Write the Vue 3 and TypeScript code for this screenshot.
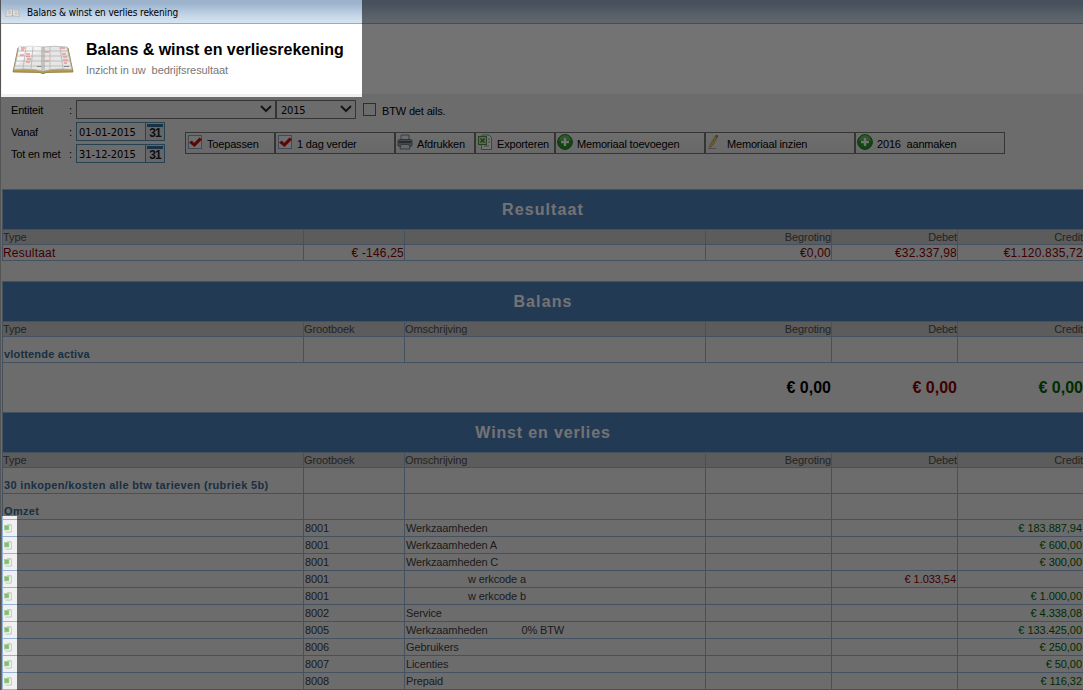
<script setup lang="ts">
interface Column { label: string; num?: boolean }
interface Row { code: string; name: string; indent?: boolean; extra?: string; debet?: string; credit?: string }
interface Action { label: string; icon: string; width: number }

const actions: Action[] = [
  { label: 'Toepassen', icon: 'check', width: 90 },
  { label: '1 dag verder', icon: 'check', width: 120 },
  { label: 'Afdrukken', icon: 'print', width: 80 },
  { label: 'Exporteren', icon: 'sheet', width: 80 },
  { label: 'Memoriaal toevoegen', icon: 'plus', width: 150 },
  { label: 'Memoriaal inzien', icon: 'pencil', width: 150 },
  { label: '2016  aanmaken', icon: 'plus', width: 150 },
]
const amounts: Column[] = [
  { label: 'Begroting', num: true },
  { label: 'Debet', num: true },
  { label: 'Credit', num: true },
]
const resultCols: Column[] = [{ label: 'Type' }, { label: '' }, { label: '' }, ...amounts]
const ledgerCols: Column[] = [{ label: 'Type' }, { label: 'Grootboek' }, { label: 'Omschrijving' }, ...amounts]
const rows: Row[] = [
  { code: '8001', name: 'Werkzaamheden', credit: '€ 183.887,94' },
  { code: '8001', name: 'Werkzaamheden A', credit: '€ 600,00' },
  { code: '8001', name: 'Werkzaamheden C', credit: '€ 300,00' },
  { code: '8001', name: 'w erkcode a', indent: true, debet: '€ 1.033,54' },
  { code: '8001', name: 'w erkcode b', indent: true, credit: '€ 1.000,00' },
  { code: '8002', name: 'Service', credit: '€ 4.338,08' },
  { code: '8005', name: 'Werkzaamheden', extra: '0% BTW', credit: '€ 133.425,00' },
  { code: '8006', name: 'Gebruikers', credit: '€ 250,00' },
  { code: '8007', name: 'Licenties', credit: '€ 50,00' },
  { code: '8008', name: 'Prepaid', credit: '€ 116,32' },
]
const groups: string[] = ['30 inkopen/kosten alle btw tarieven (rubriek 5b)', 'Omzet']
</script>

<template>
  <div class="window">
    <div class="titlebar">
      <svg class="tinybook" width="15" height="10" viewBox="0 0 15 10">
        <path d="M2 1.5 L7 1 L13 1.5 L14.5 8.5 L8 8 L.5 8.5Z" fill="#dcdcdc" stroke="#b5b2aa" stroke-width=".7" />
        <path d="M7.5 1V8M3 3H6M3 5H6M9 3H12M10 5.5H12.5" stroke="#a9a4a4" stroke-width=".7" />
      </svg>
      <span>Balans &amp; winst en verlies rekening</span>
    </div>
    <header class="head">
      <svg class="book" width="62" height="32" viewBox="0 0 62 32">
        <path d="M6 4 L1 28 L28 28.5 Q31 31 34 28.5 L61 28 L56 4Z" fill="#b59a55" stroke="#8b7539" stroke-width=".8" />
        <path d="M7 3 Q20 1.500 31 3 Q42 1.500 55 3 L60 25.5 Q43 24 31 27 Q18 24 2 25.5Z" fill="#e6e6e4" stroke="#aaa" stroke-width=".7" />
        <path d="M7 3 Q20 1.500 30 3 L30 8 Q17 9 4 22Z" fill="#f6f6f6" />
        <path d="M6 7H56M5 12H57M4 17H58M3 22H59M14 3L11 25M21 3L19 25M38 3V25M48 3L51 25" stroke="#b4b4b6" stroke-width=".8" fill="none" />
        <path d="M30 3V26M32 3V26" stroke="#a0a0a0" stroke-width="1" />
        <path d="M9 4H13M9 6H12M8 11H12M14 10H18M14 12.500H18M15 15H19M14 18H18M33 8H37M33 17H37M48 4H53M50 10H54M51 13H55M51 16H56M52 19H55" stroke="#e89a9a" stroke-width="1.300" />
        <path d="M25 22.500H29M52 22.500H57" stroke="#888" stroke-width="1.200" />
      </svg>
      <div>
        <h1>Balans &amp; winst en verliesrekening</h1>
        <p>Inzicht in uw&nbsp; bedrijfsresultaat</p>
      </div>
    </header>

    <section class="filters">
      <div class="fields">
        <div class="field">
          <label>Entiteit</label><i>:</i>
          <div class="select wide"><span></span><svg width="12" height="8" viewBox="0 0 12 8"><path d="M1 1L6 6L11 1" /></svg></div>
          <div class="select year"><span>2015</span><svg width="12" height="8" viewBox="0 0 12 8"><path d="M1 1L6 6L11 1" /></svg></div>
          <div class="box"></div><span class="btw">BTW det ails.</span>
        </div>
        <div v-for="f in [['Vanaf', '01-01-2015'], ['Tot en met', '31-12-2015']]" :key="f[0]" class="field">
          <label>{{ f[0] }}</label><i>:</i>
          <div class="date">{{ f[1] }}</div>
          <div class="cal"><b>31</b></div>
        </div>
      </div>
      <div class="actions">
        <div v-for="a in actions" :key="a.label" class="action" :style="{ width: a.width + 'px' }">
          <svg v-if="a.icon === 'check'" width="16" height="16" viewBox="0 0 16 16">
            <rect x="1.500" y="1.500" width="13" height="13" fill="#f4f6fa" stroke="#8da2c4" />
            <path d="M2 8.500L5 6.500L7 9L12.500 3.500L15 5.500L7.500 13Z" fill="#c8100c" />
          </svg>
          <svg v-else-if="a.icon === 'print'" width="16" height="16" viewBox="0 0 16 16">
            <path d="M4 6V1H12V6" fill="#eef3f8" stroke="#7b8794" />
            <rect x="1" y="5.500" width="14" height="7" rx="1.500" fill="#9ba3ab" stroke="#6b737b" />
            <path d="M2 8H14" stroke="#44494f" stroke-width="1.500" />
            <path d="M4 10.500H12L13 15H3Z" fill="#e3eaf0" stroke="#78818b" />
          </svg>
          <svg v-else-if="a.icon === 'sheet'" width="16" height="16" viewBox="0 0 16 16">
            <path d="M5.500 1H12L14.500 3.500V15.500H4.500V2Z" fill="#fff" stroke="#8298ad" />
            <path d="M11 5H13M11 8H13M7 12H12" stroke="#8298ad" />
            <rect x="1.500" y="2.500" width="8" height="8" fill="#cce5c0" stroke="#4f963e" />
            <path d="M3.500 4.500L7.500 8.500M7.500 4.500L3.500 8.500" stroke="#3c862d" stroke-width="1.400" />
          </svg>
          <svg v-else-if="a.icon === 'plus'" width="16" height="16" viewBox="0 0 16 16">
            <circle cx="8" cy="8" r="7.400" fill="#29992a" stroke="#217c22" />
            <path d="M2 7A6 6 0 0 1 14 7Q8 4 2 7" fill="#6fbf62" />
            <path d="M8 4V12M4 8H12" stroke="#fff" stroke-width="2.400" />
          </svg>
          <svg v-else width="16" height="16" viewBox="0 0 16 16">
            <path d="M1 14.500H9" stroke="#aaa" />
            <path d="M2.500 13.500L3.500 10L8.500 2L10.500 3.200L5.500 11.500Z" fill="#f0ca62" stroke="#ad883e" stroke-width=".7" />
            <path d="M8.500 2L9.500 .8L11 1.700L10.500 3.200Z" fill="#9b5555" />
          </svg>
          <span>{{ a.label }}</span>
        </div>
      </div>
    </section>

    <section class="table result">
      <h2>Resultaat</h2>
      <div class="row cols"><span v-for="(c, i) in resultCols" :key="i" :class="{ num: c.num }">{{ c.label }}</span></div>
      <div class="row sum">
        <span>Resultaat</span><span class="num">€ -146,25</span><span></span>
        <span class="num">€0,00</span><span class="num">€32.337,98</span><span class="num">€1.120.835,72</span>
      </div>
    </section>

    <section class="table balance">
      <h2>Balans</h2>
      <div class="row cols"><span v-for="(c, i) in ledgerCols" :key="i" :class="{ num: c.num }">{{ c.label }}</span></div>
      <div class="row group"><span>vlottende activa</span><span v-for="n in 5" :key="n"></span></div>
      <div class="totals"><b>€ 0,00</b><b class="red">€ 0,00</b><b class="green">€ 0,00</b></div>
    </section>

    <section class="table profit">
      <h2>Winst en verlies</h2>
      <div class="row cols"><span v-for="(c, i) in ledgerCols" :key="i" :class="{ num: c.num }">{{ c.label }}</span></div>
      <div v-for="g in groups" :key="g" class="row group"><span>{{ g }}</span><span v-for="n in 5" :key="n"></span></div>
      <div v-for="(r, i) in rows" :key="i" class="row item">
        <span>
          <svg width="8" height="9" viewBox="0 0 8 9">
            <path d="M3 .8H7.200V8H1.500" fill="#fff" stroke="#a9bfae" stroke-width=".9" />
            <rect x=".5" y="1.500" width="4.500" height="4.500" fill="#82bd70" stroke="#a7cf9b" stroke-width=".8" />
          </svg>
        </span>
        <span>{{ r.code }}</span>
        <span :class="{ indent: r.indent }">{{ r.name }}<em v-if="r.extra">{{ r.extra }}</em></span>
        <span></span>
        <span class="num red">{{ r.debet }}</span>
        <span class="num green">{{ r.credit }}</span>
      </div>
    </section>
    <div class="shade"></div>
  </div>
</template>

<style>
body { margin: 0; overflow: hidden; }
</style>

<style scoped>
.window {
  position: relative;
  box-sizing: border-box;
  width: 1083px;
  height: 690px;
  overflow: hidden;
  background: #f0f0f0;
  border-left: 1px solid #555;
  font: 11px "Liberation Sans", Arial, sans-serif;
  color: #000;
}
.titlebar {
  display: flex;
  align-items: center;
  box-sizing: border-box;
  height: 24px;
  padding: 2px 0 0 4px;
  gap: 7px;
  background: linear-gradient(#9db2c9 0, #9cb4cf 15%, #c2d4e6 65%, #d7e4f1);
  border-bottom: 1px solid #a5a9ae;
  font: 10px "DejaVu Sans Condensed", "DejaVu Sans", sans-serif;
  letter-spacing: -.12px;
}
.head {
  display: flex;
  height: 70px;
  margin-left: 1px;
  background: #fff;
}
.book { margin: 20px 0 0 10px; }
.head div { margin-left: 12px; }
h1 {
  margin: 16px 0 0;
  font-size: 16px;
  line-height: 20px;
  letter-spacing: -.03px;
  white-space: nowrap;
}
p { margin: 4px 0 0; line-height: 13px; color: #777; letter-spacing: -.07px; }
.filters {
  display: flex;
  height: 95px;
  margin-left: 10px;
}
.fields { width: 174px; padding-top: 6px; }
.field {
  display: flex;
  height: 19px;
  margin-bottom: 3px;
  line-height: 21px;
  white-space: nowrap;
  letter-spacing: -.2px;
}
.field label { flex: none; width: 58px; }
.field i { flex: none; width: 7px; font-style: normal; }
.select {
  display: flex;
  flex: none;
  align-items: center;
  justify-content: space-between;
  box-sizing: border-box;
  height: 19px;
  padding: 0 3px 2px 4px;
  border: 1px solid #777;
  font-family: "DejaVu Sans Condensed", "DejaVu Sans", sans-serif;
}
.select span { padding-top: 3px; }
.select path { fill: none; stroke: #333; stroke-width: 2; }
.wide { width: 200px; }
.year { width: 80px; }
.box {
  flex: none;
  box-sizing: border-box;
  width: 13px;
  height: 13px;
  margin: 3px 6px 0 7px;
  border: 1px solid #666;
}
.btw { padding-top: 1px; letter-spacing: -.15px; }
.date {
  flex: none;
  box-sizing: border-box;
  width: 70px;
  height: 19px;
  padding-left: 2px;
  border: 1px solid #5591b5;
  line-height: 19px;
  font-family: "DejaVu Sans Condensed", "DejaVu Sans", sans-serif;
  letter-spacing: -.08px;
}
.cal {
  flex: none;
  box-sizing: border-box;
  width: 19px;
  height: 19px;
  padding: 1px;
  border: 1px solid #5591b5;
  border-left: 0;
  background: #e0e5e9;
}
.cal b {
  display: block;
  height: 11px;
  border-top: 3px solid #386f9a;
  font-size: 12px;
  line-height: 13px;
  text-align: center;
  letter-spacing: -1px;
  color: #222;
}
.actions { display: flex; height: 22px; margin-top: 38px; }
.action {
  display: flex;
  box-sizing: border-box;
  height: 22px;
  padding: 1px 0 0 1px;
  border: 1px solid #777;
  background: linear-gradient(#f2f2f2, #e8e8e8);
  white-space: pre;
  line-height: 21px;
  letter-spacing: -.18px;
}
.action svg { flex: none; margin-right: 4px; }
.table {
  margin-left: 1px;
  width: 1081px;
  border-left: 1px solid #95b3d7;
  box-sizing: border-box;
}
.result { margin-bottom: 20px; }
h2 {
  box-sizing: border-box;
  height: 41px;
  margin: 0;
  border-top: 1px solid #95b3d7;
  border-bottom: 1px solid #95b3d7;
  background: #4f81bd;
  color: #fff;
  font-size: 16px;
  line-height: 39px;
  letter-spacing: 1.1px;
  text-align: center;
}
.profit h2 { letter-spacing: .85px; }
.row {
  display: grid;
  box-sizing: border-box;
  grid-template-columns: 300px 101px 301px 126px 126px 126px;
  border-bottom: 1px solid #95b3d7;
}
.row span {
  box-sizing: border-box;
  overflow: hidden;
  white-space: nowrap;
  border-left: 1px solid #95b3d7;
}
.row span:first-child { border-left: 0; }
.row .num { text-align: right; }
.cols { height: 15px; background: #ccc; color: #505050; line-height: 15px; letter-spacing: -.1px; }
.sum { height: 16px; line-height: 16px; font-size: 12px; color: #8b0000; letter-spacing: .2px; }
.group { height: 26px; }
.group span { padding: 9px 0 0 1px; line-height: 16px; font-weight: bold; color: #366a94; letter-spacing: .17px; }
.profit .group span { letter-spacing: .34px; }
.totals {
  display: flex;
  justify-content: flex-end;
  height: 49px;
  font-size: 16px;
  line-height: 49px;
}
.totals b { width: 126px; text-align: right; }
.red { color: #8b0000; }
.green { color: #006400; }
.item { height: 17px; line-height: 17px; }
.item span { padding: 0 1px; color: #404040; letter-spacing: -.12px; }
.item svg { display: block; margin-top: 4px; }
.item .num { letter-spacing: -.05px; }
.item .red { color: #8b0000; }
.item .green { color: #006400; }
.item .indent { padding-left: 63px; }
em { font-style: normal; margin-left: 34px; }
.shade {
  position: absolute;
  inset: 0;
  background: rgba(0, 0, 0, .55);
  clip-path: polygon(361px 0, 1083px 0, 1083px 690px, 16px 690px, 16px 516px, 1px 516px, 1px 690px, 0 690px, 0 97px, 361px 97px);
}
</style>
